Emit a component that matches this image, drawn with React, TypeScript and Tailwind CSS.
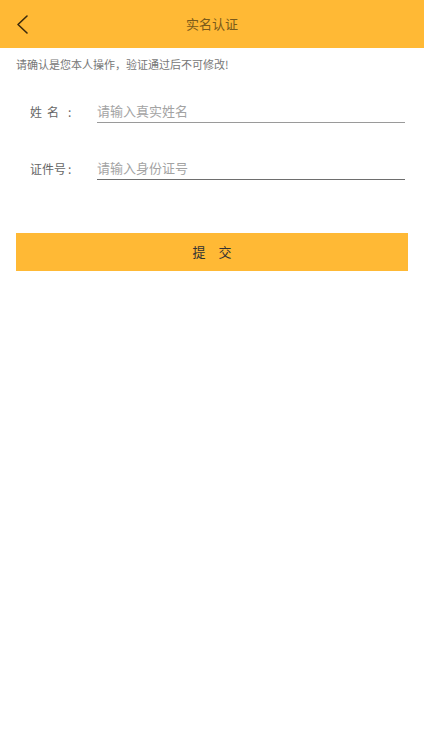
import React from "react";

export default function App() {
  const font = { fontFamily: '"Noto Sans CJK SC", "Noto Sans", sans-serif' };
  return (
    <div className="w-[424px] min-h-[754px] bg-white" style={font}>
      <div className="h-[48px] bg-[#ffb935] flex items-center relative">
        <button className="absolute left-[12px] top-[12px] w-[24px] h-[24px] flex items-center justify-center">
          <svg width="24" height="24" viewBox="0 0 24 24" fill="none">
            <polyline points="15,4 6,12.5 15,21" stroke="#3b2a0c" strokeWidth="1.6" strokeLinecap="round" strokeLinejoin="round" />
          </svg>
        </button>
        <div className="flex-1 text-center text-[13px] text-[#7a5a1a]">实名认证</div>
      </div>

      <div className="mt-[8px] pl-[16px] text-[11px] leading-[16px] text-[#777]">
        请确认是您本人操作，验证通过后不可修改!
      </div>

      <div className="mt-[26px] flex items-end pl-[30px] pr-[19px]">
        <div className="w-[67px] flex pb-[3px] text-[12px] leading-[16px] text-[#666]">
          <div className="w-[38px] flex">
            <span>姓</span>
            <span className="ml-[5px]">名</span>
          </div>
          <span>:</span>
        </div>
        <div className="flex-1 border-b border-[#9a9a9a] pt-[5px] pb-[3px]">
          <input
            className="block w-full h-[16px] leading-[16px] text-[13px] text-[#333] outline-none bg-transparent placeholder:text-[#a3a3a3]"
            placeholder="请输入真实姓名"
          />
        </div>
      </div>

      <div className="mt-[32px] flex items-end pl-[30px] pr-[19px]">
        <div className="w-[67px] flex pb-[3px] text-[12px] leading-[16px] text-[#666]">
          <div className="w-[38px] flex">
            <span>证件号</span>
          </div>
          <span>:</span>
        </div>
        <div className="flex-1 border-b border-[#6e6e6e] pt-[5px] pb-[3px]">
          <input
            className="block w-full h-[16px] leading-[16px] text-[13px] text-[#333] outline-none bg-transparent placeholder:text-[#a3a3a3]"
            placeholder="请输入身份证号"
          />
        </div>
      </div>

      <div className="mt-[53px] mx-[16px]">
        <button className="w-full h-[38px] bg-[#ffb935] text-[13px] text-[#333] flex items-center justify-center">
          提　交
        </button>
      </div>
    </div>
  );
}
